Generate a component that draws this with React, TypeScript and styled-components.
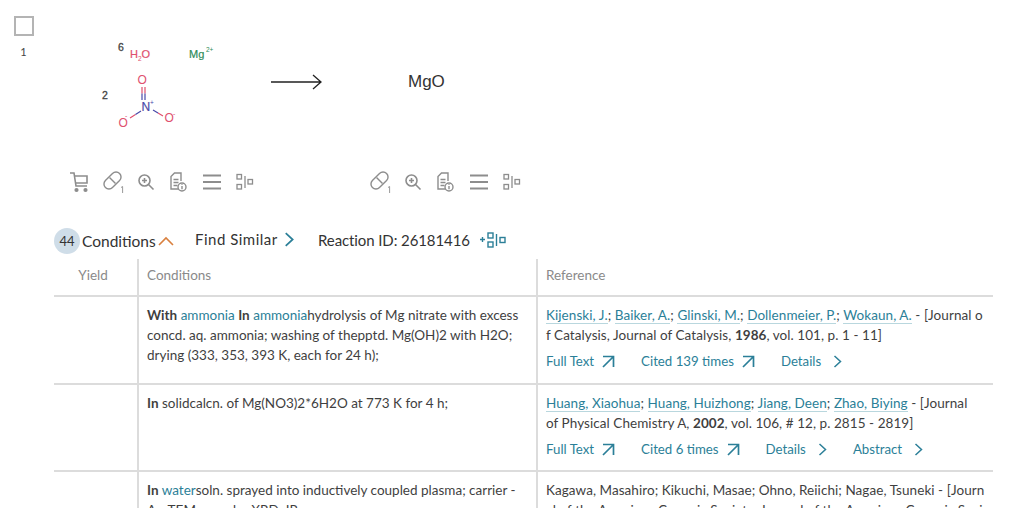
import { createGlobalStyle, styled } from "styled-components";

const GlobalStyle = createGlobalStyle`
  html, body {
    margin: 0;
    padding: 0;
    background: #fff;
  }
  body {
    font-family: "Lato", "Open Sans", sans-serif;
    color: #3f3f3f;
  }
`;

const TEAL = "#2b7f98";
const ICON = "#8d8d8d";
const RED = "#e0506e";
const BLUE = "#4a4aa8";

const CartIcon = () => (
  <svg width="20" height="22" viewBox="0 0 20 22" fill="none" stroke={ICON} strokeWidth="1.6">
    <path d="M1 2h4l2 13h11" />
    <path d="M5.6 5H18v7H6.8" />
    <circle cx="7.5" cy="19" r="1.3" fill={ICON} />
    <circle cx="16.5" cy="19" r="1.3" fill={ICON} />
  </svg>
);

const PillIcon = () => (
  <svg width="19" height="22" viewBox="0 0 19 22" fill="none" stroke={ICON} strokeWidth="1.4" overflow="visible">
    <rect x="-1.5" y="4.5" width="20" height="10" rx="5" transform="rotate(-45 8.5 9.5)" />
    <path d="M5.5 6.5l6 6" />
    <path d="M17 16.5l1.6-1v6.5" strokeWidth="0.9" />
  </svg>
);

const ZoomIcon = () => (
  <svg width="17" height="18" viewBox="0 0 17 18" fill="none" stroke={ICON} strokeWidth="1.6">
    <circle cx="6.5" cy="7.5" r="5.5" />
    <path d="M4 7.5h5M6.5 5v5" />
    <path d="M10.5 11.5l5 5" />
  </svg>
);

const DocIcon = () => (
  <svg width="18" height="20" viewBox="0 0 18 20" fill="none" stroke={ICON} strokeWidth="1.4">
    <path d="M9 17H1V4.5L4.5 1H11v8" />
    <path d="M3.5 7.5h5M3.5 10.5h5M3.5 13.5h4" />
    <circle cx="12" cy="15" r="4" fill="#fff" />
    <path d="M12 14v3.2M12 12.2v.9" />
  </svg>
);

const MenuIcon = () => (
  <svg width="18" height="16" viewBox="0 0 18 16" fill="none" stroke={ICON} strokeWidth="2">
    <path d="M0 1.5h18M0 8h18M0 14.5h18" />
  </svg>
);

const AlignIcon = () => (
  <svg width="18" height="18" viewBox="0 0 18 18" fill="none" stroke={ICON} strokeWidth="1.3">
    <rect x="1" y="1.5" width="4.5" height="4.5" />
    <rect x="1" y="11.5" width="4.5" height="4.5" />
    <path d="M9 3v12" />
    <rect x="12" y="6.5" width="4.5" height="4.5" />
  </svg>
);

const ArrowOut = () => (
  <svg width="13" height="13" viewBox="0 0 13 13" fill="none" stroke={TEAL} strokeWidth="1.7">
    <path d="M1 1.5h10.5V12M11.5 1.5L1 12" />
  </svg>
);

const Chevron = ({ height = 13 }: { height?: number }) => (
  <svg width={(height * 9) / 13} height={height} viewBox="0 0 9 13" fill="none" stroke={TEAL} strokeWidth="1.5">
    <path d="M1.5 1l6 5.5-6 5.5" />
  </svg>
);

const Reactants = () => (
  <svg width="140" height="100" viewBox="0 0 140 100" fontFamily="Liberation Sans, sans-serif">
    <text x="22" y="10" fontSize="10.5" stroke="#444" strokeWidth="0.3" fill="#444">6</text>
    <text x="34" y="17" fontSize="11" fill={RED} stroke={RED} strokeWidth="0.2">H</text>
    <text x="42" y="20" fontSize="6.5" fill={RED}>2</text>
    <text x="45.5" y="17" fontSize="11" fill={RED} stroke={RED} strokeWidth="0.2">O</text>
    <text x="93" y="17" fontSize="11" fill="#2e8b57" stroke="#2e8b57" strokeWidth="0.2">Mg</text>
    <text x="110" y="11" fontSize="6.5" fill="#2e8b57">2+</text>
    <text x="6" y="58" fontSize="10.5" stroke="#444" strokeWidth="0.3" fill="#444">2</text>
    <text x="41.5" y="43" fontSize="12" fill={RED}>O</text>
    <text x="45.5" y="70" fontSize="12" fill={BLUE} stroke={BLUE} strokeWidth="0.2">N</text>
    <text x="54" y="64" fontSize="6.5" fill={BLUE}>+</text>
    <text x="22.5" y="86" fontSize="12" fill={RED}>O</text>
    <text x="29" y="77" fontSize="7" fill={RED}>-</text>
    <text x="68.5" y="81" fontSize="12" fill={RED}>O</text>
    <text x="77" y="75" fontSize="7" fill={RED}>-</text>
    <g strokeWidth="1.2" fill="none">
      <path d="M46 46v6.5M49 46v6.5M34 77l5.5-3.5M67 75l-5-3" stroke={RED} />
      <path d="M46 52.5V59M49 52.5V59M39.5 73.5L45 70M62 72l-5-3" stroke={BLUE} />
    </g>
  </svg>
);

const Arrow = () => (
  <svg width="52" height="20" viewBox="0 0 52 20" fill="none" stroke="#222" strokeWidth="1.3">
    <path d="M0 10h50M42 3l8 7-8 7" />
  </svg>
);

const Tools = ({ cart }: { cart?: boolean }) => (
  <ToolRow>
    {cart && <CartIcon />}
    <PillIcon />
    <ZoomIcon />
    <DocIcon />
    <MenuIcon />
    <AlignIcon />
  </ToolRow>
);

const OutLink = ({ children }: { children: string }) => (
  <ActionLink $gap={8}>
    {children}
    <ArrowOut />
  </ActionLink>
);

const MoreLink = ({ children }: { children: string }) => (
  <ActionLink $gap={12}>
    {children}
    <Chevron />
  </ActionLink>
);

const App = () => (
  <Page>
    <GlobalStyle />
    <Reaction>
      <Side>
        <CheckBox />
        <Index>1</Index>
      </Side>
      <Scheme>
        <Equation>
          <ReactantBox>
            <Reactants />
          </ReactantBox>
          <ArrowBox>
            <Arrow />
          </ArrowBox>
          <Product>MgO</Product>
        </Equation>
        <ToolGroups>
          <ToolSlot $width={302}>
            <Tools cart />
          </ToolSlot>
          <ToolSlot $width={160}>
            <Tools />
          </ToolSlot>
        </ToolGroups>
      </Scheme>
    </Reaction>

    <Summary>
      <CountWrap>
        <Count>44</Count>
        <SummaryText>Conditions</SummaryText>
        <UpChevron viewBox="0 0 16 10" fill="none" stroke="#d9803f" strokeWidth="1.6">
          <path d="M1 9l7-7 7 7" />
        </UpChevron>
      </CountWrap>
      <SimilarLink>
        Find Similar
        <Chevron height={15} />
      </SimilarLink>
      <ReactionId>Reaction ID: 26181416</ReactionId>
      <svg width="26" height="16" viewBox="0 0 26 16" fill="none" stroke={TEAL} strokeWidth="1.4">
        <path d="M0 7.5h5M2.5 5v5" />
        <rect x="8" y="1" width="5" height="5" />
        <rect x="8" y="10" width="5" height="5" />
        <path d="M16.5 2v12" />
        <rect x="20" y="5.5" width="5" height="5" />
      </svg>
    </Summary>

    <Table>
      <HeaderRow>
        <HeadCell $align="center">Yield</HeadCell>
        <HeadCell>Conditions</HeadCell>
        <HeadCell>Reference</HeadCell>
      </HeaderRow>

      <BodyRow $height={86}>
        <Cell />
        <Cell>
          <b>With</b> <Term>ammonia</Term> <b>In</b> <Term>ammonia</Term>hydrolysis of Mg nitrate with excess
          concd. aq. ammonia; washing of thepptd. Mg(OH)2 with H2O; drying (333, 353, 393 K, each for 24 h);
        </Cell>
        <Cell>
          <Citation>
            <Author>Kijenski, J.</Author>; <Author>Baiker, A.</Author>; <Author>Glinski, M.</Author>;{" "}
            <Author>Dollenmeier, P.</Author>; <Author>Wokaun, A.</Author> - [Journal o
            <br />f Catalysis, Journal of Catalysis, <b>1986</b>, vol. 101, p. 1 - 11]
          </Citation>
          <Actions>
            <OutLink>Full Text</OutLink>
            <OutLink>Cited 139 times</OutLink>
            <MoreLink>Details</MoreLink>
          </Actions>
        </Cell>
      </BodyRow>

      <BodyRow $height={85}>
        <Cell />
        <Cell>
          <b>In</b> solidcalcn. of Mg(NO3)2*6H2O at 773 K for 4 h;
        </Cell>
        <Cell>
          <Citation>
            <Author>Huang, Xiaohua</Author>; <Author>Huang, Huizhong</Author>; <Author>Jiang, Deen</Author>;{" "}
            <Author>Zhao, Biying</Author> - [Journal
            <br />
            of Physical Chemistry A, <b>2002</b>, vol. 106, # 12, p. 2815 - 2819]
          </Citation>
          <Actions>
            <OutLink>Full Text</OutLink>
            <OutLink>Cited 6 times</OutLink>
            <MoreLink>Details</MoreLink>
            <MoreLink>Abstract</MoreLink>
          </Actions>
        </Cell>
      </BodyRow>

      <BodyRow $height={85}>
        <Cell />
        <Cell>
          <b>In</b> <Term>water</Term>soln. sprayed into inductively coupled plasma; carrier - Ar; TEM; powder XRD; IR;
        </Cell>
        <Cell>
          <Citation>
            Kagawa, Masahiro; Kikuchi, Masae; Ohno, Reiichi; Nagae, Tsuneki - [Journ
            <br />
            al of the American Ceramic Society, Journal of the American Ceramic Socie
          </Citation>
        </Cell>
      </BodyRow>
    </Table>
  </Page>
);

const Page = styled.div`
  width: 1024px;
  height: 508px;
  overflow: hidden;
  box-sizing: border-box;
  padding: 16px 31px 0 14px;
  font-size: 13.5px;
  line-height: 20px;
`;

const Reaction = styled.div`
  display: flex;
  height: 203px;
`;

const Side = styled.div`
  width: 55px;
  flex: none;
`;

const CheckBox = styled.div`
  width: 20px;
  height: 20px;
  box-sizing: border-box;
  border: 2px solid #b4b4b4;
`;

const Index = styled.div`
  width: 19px;
  margin-top: 6px;
  font-size: 11px;
  text-align: center;
  color: #444;
`;

const Scheme = styled.div`
  display: flex;
  flex-direction: column;
`;

const Equation = styled.div`
  display: flex;
  height: 154px;
`;

const ReactantBox = styled.div`
  width: 202px;
  padding: 25px 0 0 27px;
  box-sizing: border-box;
`;

const ArrowBox = styled.div`
  width: 137px;
  padding-top: 56px;
  box-sizing: border-box;
`;

const Product = styled.div`
  padding-top: 56px;
  font-family: "Liberation Sans", sans-serif;
  font-size: 17px;
  color: #333;
`;

const ToolGroups = styled.div`
  display: flex;
`;

const ToolSlot = styled.div<{ $width: number }>`
  width: ${({ $width }) => $width}px;
`;

const ToolRow = styled.div`
  display: flex;
  align-items: center;
  gap: 15px;
  height: 24px;
`;

const Summary = styled.div`
  display: flex;
  align-items: center;
  box-sizing: border-box;
  height: 40px;
  padding-top: 2px;
  margin-left: 40px;
  font-size: 15px;
  color: #333;
`;

const CountWrap = styled.div`
  display: flex;
  align-items: center;
  width: 141px;
  margin-top: 2px;
`;

const Count = styled.span`
  width: 26px;
  height: 26px;
  flex: none;
  border-radius: 50%;
  background: #cfdde8;
  font-size: 13px;
  line-height: 26px;
  text-align: center;
`;

const SummaryText = styled.span`
  margin-left: 2px;
  font-size: 15.5px;
`;

const UpChevron = styled.svg`
  width: 16px;
  height: 10px;
  margin-left: 2px;
`;

const SimilarLink = styled.span`
  display: inline-flex;
  align-items: center;
  gap: 6px;
  width: 123px;
  margin-bottom: 2px;
  letter-spacing: 0.5px;
`;

const ReactionId = styled.span`
  width: 162px;
  letter-spacing: -0.1px;
`;

const Table = styled.div`
  margin-left: 40px;
  width: 939px;
`;

const columns = "83px 399px 457px";

const HeaderRow = styled.div`
  display: grid;
  grid-template-columns: ${columns};
  height: 36px;
  border-bottom: 2px solid #dcdcdc;
`;

const HeadCell = styled.div<{ $align?: string }>`
  padding: 6px 8px 0;
  border-left: 2px solid #dcdcdc;
  color: #8a8a8a;
  text-align: ${({ $align }) => $align || "left"};
  &:first-child {
    border-left: 0;
    padding: 6px 5px 0 0;
  }
`;

const BodyRow = styled.div<{ $height: number }>`
  display: grid;
  grid-template-columns: ${columns};
  height: ${({ $height }) => $height}px;
  border-bottom: 2px solid #dcdcdc;
`;

const Cell = styled.div`
  padding: 8px 10px 0 8px;
  border-left: 2px solid #dcdcdc;
  &:first-child {
    border-left: 0;
  }
`;

const Term = styled.span`
  color: ${TEAL};
`;

const Citation = styled.div`
  white-space: nowrap;
  letter-spacing: 0.06px;
`;

const Author = styled.span`
  color: ${TEAL};
  border-bottom: 1px solid #b9d7de;
`;

const Actions = styled.div`
  display: flex;
  gap: 26px;
  margin-top: 6px;
  font-size: 13.25px;
`;

const ActionLink = styled.span<{ $gap: number }>`
  display: inline-flex;
  align-items: center;
  gap: ${({ $gap }) => $gap}px;
  color: ${TEAL};
`;

export default App;
